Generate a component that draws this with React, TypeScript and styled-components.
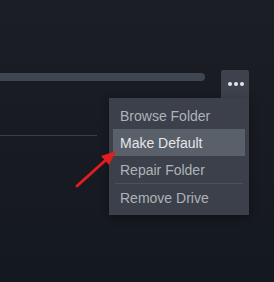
import React from 'react';
import styled, { createGlobalStyle } from 'styled-components';

const GlobalStyle = createGlobalStyle`
  html, body {
    margin: 0;
    padding: 0;
    background: #171a21;
  }
  * {
    box-sizing: border-box;
  }
`;

const Page = styled.div`
  position: relative;
  width: 274px;
  height: 282px;
  overflow: hidden;
  padding-top: 70px;
  background: linear-gradient(180deg, #1b1e25 0%, #181b22 45%, #141820 100%);
  font-family: 'Liberation Sans', Arial, sans-serif;
`;

const HeaderRow = styled.div`
  display: flex;
  align-items: flex-start;
  gap: 16px;
  padding-right: 25px;
`;

const UsageBar = styled.div`
  flex: 1;
  height: 8px;
  margin-top: 3px;
  background: #3f4551;
  border-radius: 0 4px 4px 0;
`;

const MoreButton = styled.button`
  display: flex;
  align-items: center;
  justify-content: center;
  gap: 2px;
  width: 28px;
  height: 28px;
  padding: 0 0 0 1px;
  border: none;
  border-radius: 2px 2px 0 0;
  background: #3d424c;
  cursor: pointer;
`;

const Dot = styled.span`
  width: 4px;
  height: 4px;
  border-radius: 50%;
  background: #e6e8ea;
`;

const DividerLine = styled.div`
  width: 97px;
  height: 1px;
  margin-top: 37px;
  background: #3a404b;
`;

const Menu = styled.div`
  position: absolute;
  top: 98px;
  left: 109px;
  width: 140px;
  padding: 4px;
  background: #3b404a;
  box-shadow: 0 2px 8px rgba(0, 0, 0, 0.35);
`;

const MenuItem = styled.div<{ $active?: boolean }>`
  height: 27px;
  padding: 0 7px;
  display: flex;
  align-items: center;
  font-size: 14px;
  color: ${({ $active }) => ($active ? '#e4e6e8' : '#aeb3b9')};
  background: ${({ $active }) => ($active ? '#5a606a' : 'transparent')};
  white-space: nowrap;
`;

const MenuSeparator = styled.div`
  height: 1px;
  margin: 0 2px;
  background: #4c525c;
`;

const Annotation = styled.svg`
  position: absolute;
  left: 0;
  top: 0;
  pointer-events: none;
`;

const App: React.FC = () => {
  return (
    <>
      <GlobalStyle />
      <Page>
        <HeaderRow>
          <UsageBar />
          <MoreButton aria-label="More">
            <Dot />
            <Dot />
            <Dot />
          </MoreButton>
        </HeaderRow>
        <DividerLine />

        <Menu>
          <MenuItem>Browse Folder</MenuItem>
          <MenuItem $active>Make Default</MenuItem>
          <MenuItem>Repair Folder</MenuItem>
          <MenuSeparator />
          <MenuItem>Remove Drive</MenuItem>
        </Menu>

        {/* red pointer arrow drawn on top of the screenshot */}
        <Annotation width="274" height="282" viewBox="0 0 274 282">
          <line x1="77" y1="186" x2="108" y2="158" stroke="#e11d1f" strokeWidth="3" strokeLinecap="round" />
          <polygon points="116,151 101,156 109,165" fill="#e11d1f" />
        </Annotation>
      </Page>
    </>
  );
};

export default App;
